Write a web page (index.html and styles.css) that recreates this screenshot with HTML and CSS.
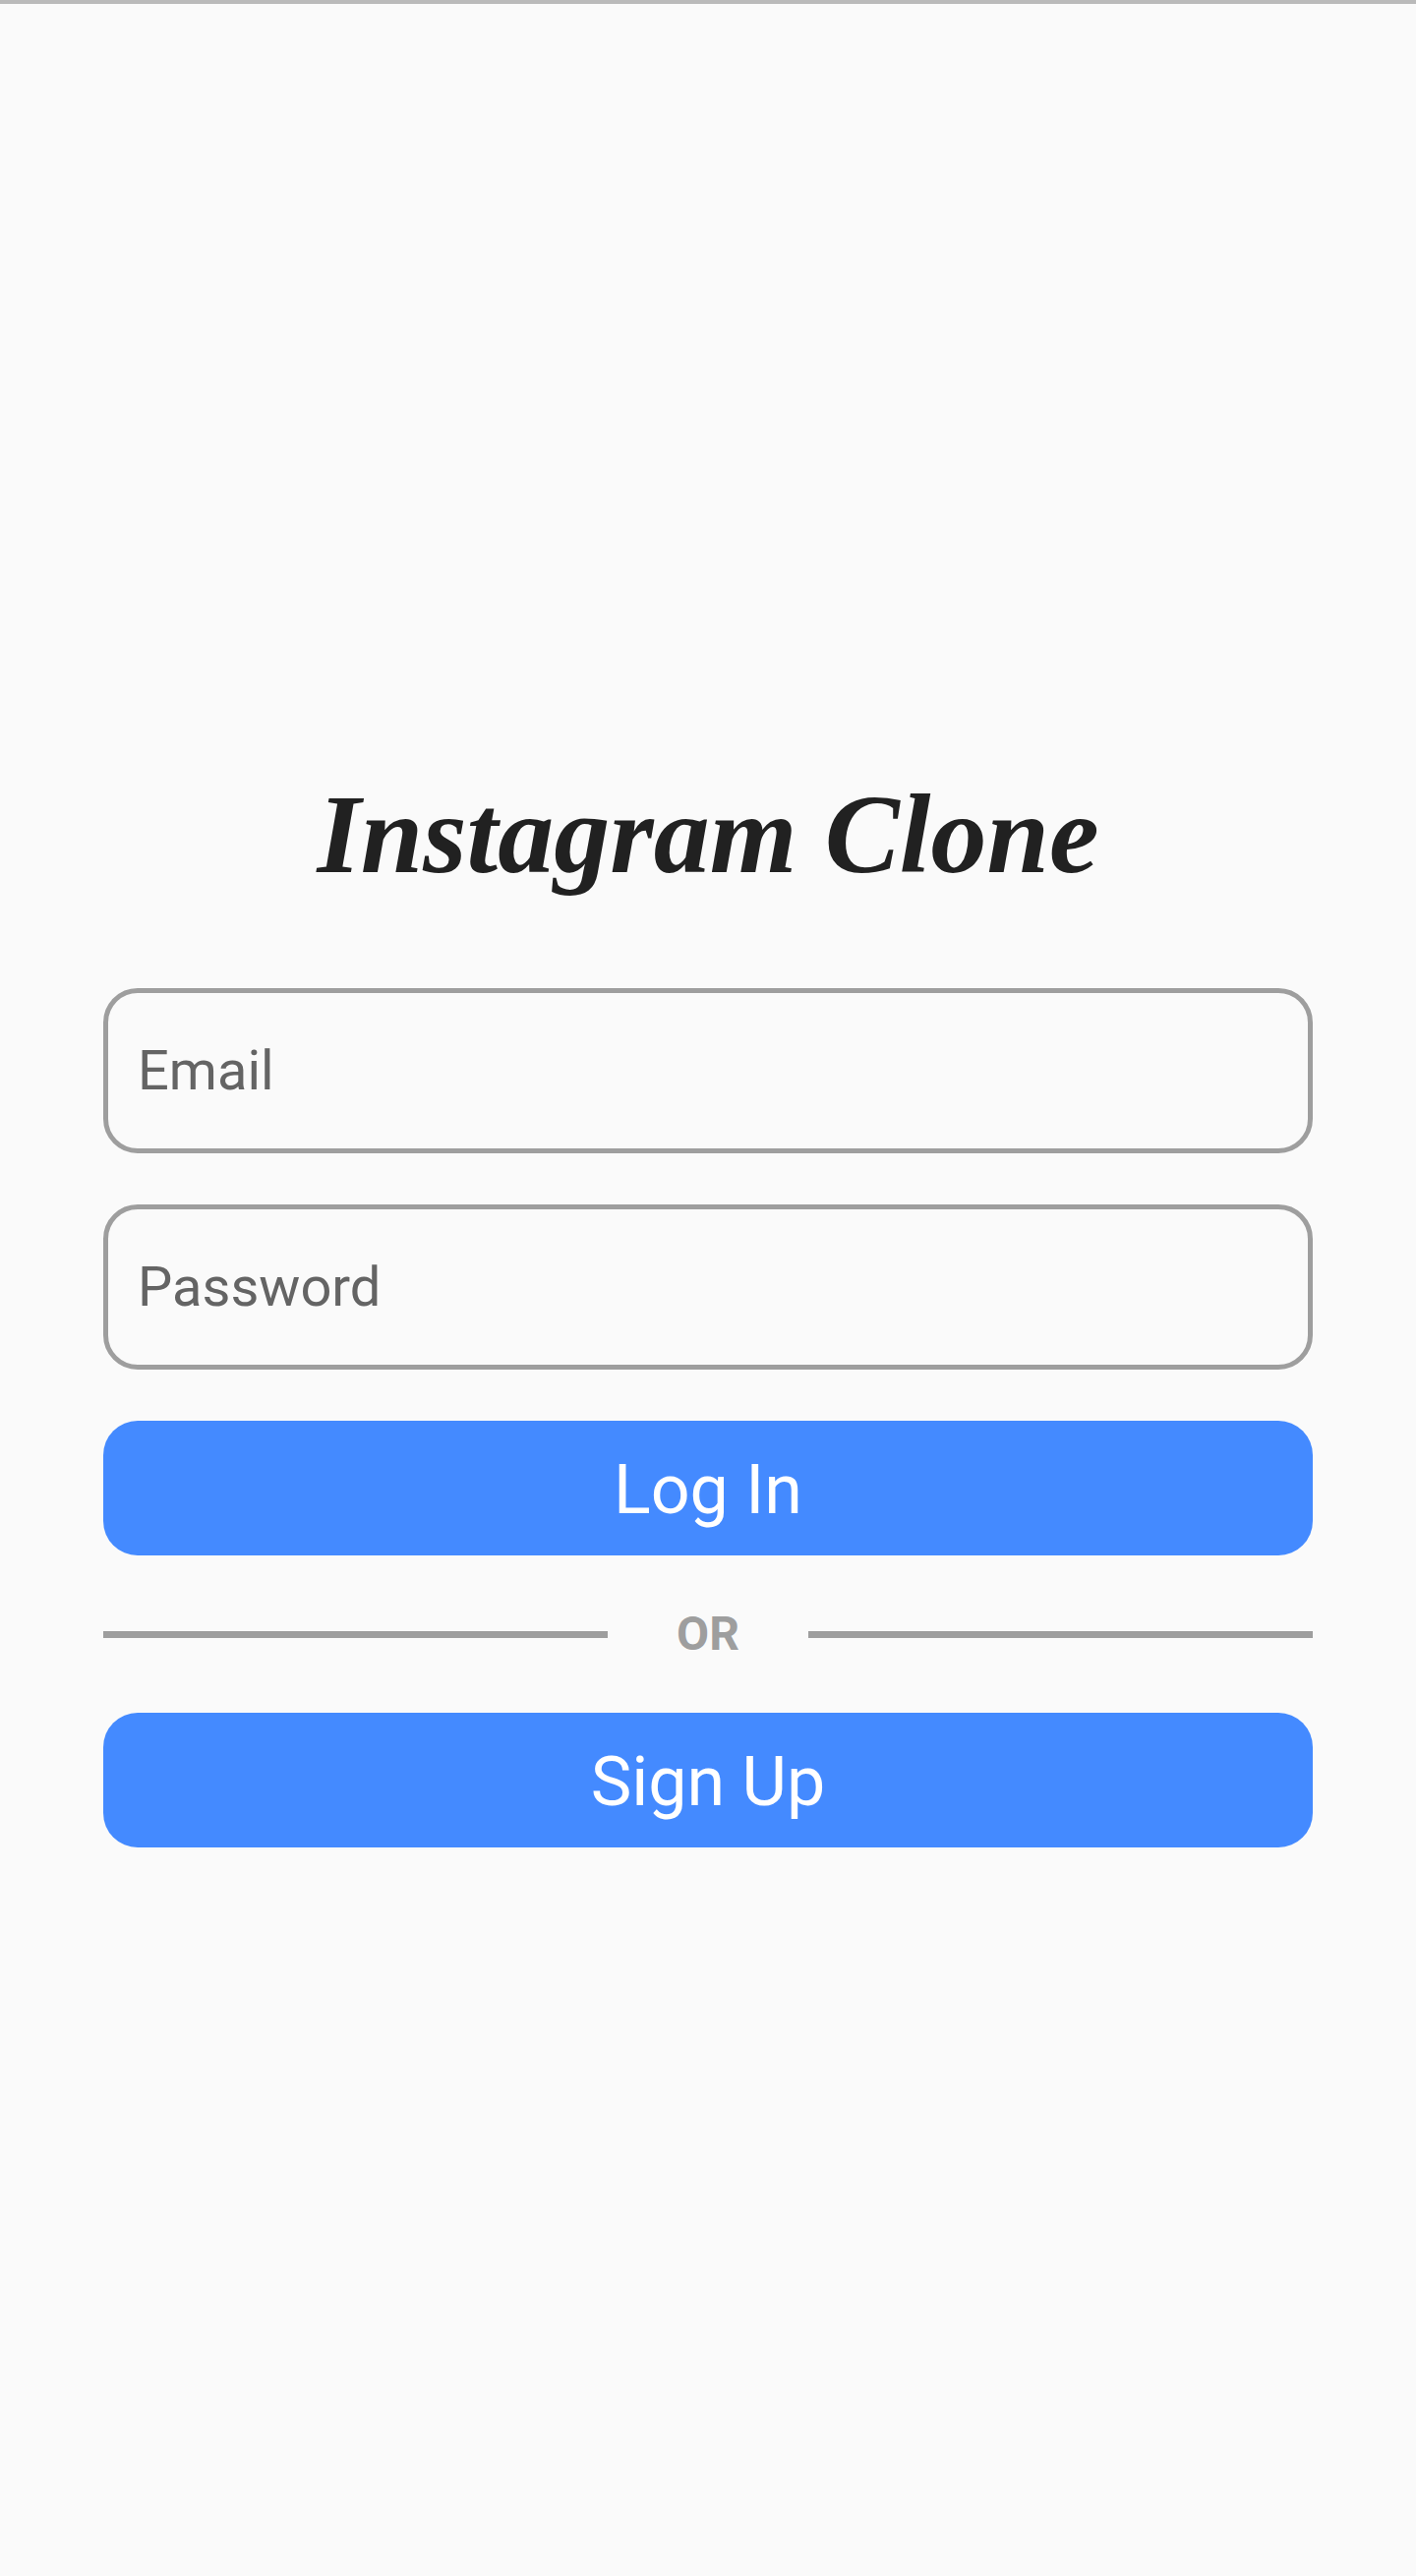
FILE: index.html
```html
<!DOCTYPE html>
<html lang="en">
<head>
  <meta charset="utf-8">
  <meta name="viewport" content="width=device-width, initial-scale=1">
  <title>Instagram Clone</title>
  <link rel="stylesheet" href="styles.css">
</head>
<body>
  <main class="login">
    <h1 class="wordmark">Instagram Clone</h1>
    <form class="form">
      <input class="field" type="email" placeholder="Email" aria-label="Email">
      <input class="field" type="password" placeholder="Password" aria-label="Password">
      <button class="button" type="submit">Log In</button>
      <div class="divider">OR</div>
      <button class="button" type="button">Sign Up</button>
    </form>
  </main>
</body>
</html>
```

FILE: styles.css
```css
* {
  box-sizing: border-box;
}

body {
  margin: 0;
  background: #fafafa;
  font-family: Roboto, sans-serif;
}

.login {
  display: flex;
  flex-direction: column;
  justify-content: center;
  gap: 52px;
  min-height: 100vh;
  padding: 0 105px;
  border-top: 4px solid #bababa;
}

.wordmark {
  margin: 0;
  color: #212121;
  font-family: "Liberation Serif", serif;
  font-size: 114px;
  font-style: italic;
  font-weight: 700;
  line-height: 208px;
  text-align: center;
}

.form {
  display: flex;
  flex-direction: column;
  gap: 52px;
}

.field {
  width: 100%;
  height: 168px;
  padding: 0 30px;
  border: 5px solid #9e9e9e;
  border-radius: 35px;
  background: transparent;
  color: #212121;
  font-family: inherit;
  font-size: 56px;
}

.field::placeholder {
  color: #646464;
  opacity: 1;
}

.button {
  height: 137px;
  padding: 3px 35px 0;
  border: 0;
  border-radius: 35px;
  background: #448aff;
  color: #fff;
  font-family: inherit;
  font-size: 70px;
  cursor: pointer;
}

.divider {
  display: flex;
  align-items: center;
  gap: 70px;
  color: #9e9e9e;
  font-size: 48px;
  font-weight: 700;
  line-height: 56px;
}

.divider::before,
.divider::after {
  flex: 1;
  height: 7px;
  background: #9e9e9e;
  content: "";
}
```
